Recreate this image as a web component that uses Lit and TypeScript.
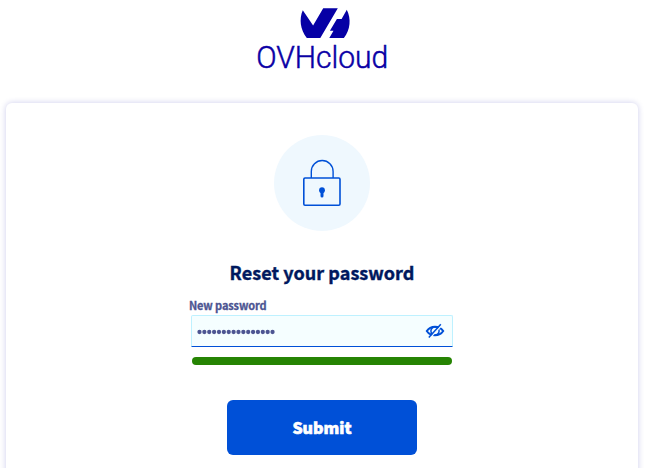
import { LitElement, html, css, svg } from "lit";
import { customElement } from "lit/decorators.js";

@customElement("brand-logo")
class BrandLogo extends LitElement {
  static styles = css`
    :host { display: block; height: 74px; }
    svg { display: block; overflow: visible; }
    .name {
      font-family: Roboto, "Liberation Sans", sans-serif; font-size: 31.5px; font-weight: 300;
      fill: #0a00a5; stroke: #0a00a5; stroke-width: 0.5px;
    }
  `;
  render() {
    return html`<svg width="154" height="80" viewBox="-10 0 154 80" role="img" aria-label="OVHcloud">
      <g fill="#0600a5">
        <path d="M47.8 10.2L58.1 25.4L68.2 8.3H82.8L65.3 38H51.8C45.2 29.5 44 19 47.8 10.2Z" />
        <path d="M91.8 9.8C96.3 18.8 95.5 29.6 88.9 38H74.3L78.5 30.8H74.9L81.9 19H86.6Z" />
      </g>
      <text class="name" x="1.3" y="68" textLength="132" lengthAdjust="spacingAndGlyphs">OVHcloud</text>
    </svg>`;
  }
}

@customElement("lock-badge")
class LockBadge extends LitElement {
  static styles = css`
    :host { display: flex; width: 96px; height: 96px; border-radius: 50%; background: #eff8fe; }
  `;
  render() {
    return html`<svg width="96" height="96" viewBox="0 0 96 96" fill="none" stroke="#0050d7" stroke-width="1.6">
      <path stroke-width="1.4" d="M37.3 43V36.4a10.9 10.9 0 0 1 21.8 0V43" />
      <rect x="29.8" y="43" width="36.2" height="27.2" rx="1.2" />
      <circle cx="48" cy="55.2" r="2.9" fill="#0050d7" stroke="none" />
      <path d="M48 55v6" stroke-width="3" stroke-linecap="round" />
    </svg>`;
  }
}

@customElement("app-root")
class AppRoot extends LitElement {
  static styles = css`
    * { box-sizing: border-box; }
    :host {
      display: flex; flex-direction: column; align-items: center;
      height: 468px; overflow: hidden; background: #fff;
      font-family: "Noto Sans CJK SC", "Noto Sans", sans-serif;
    }
    brand-logo { margin-left: -1px; }
    .card {
      display: flex; flex-direction: column; align-items: center;
      width: 632px; height: 400px; flex: none; margin: 29px 1px 0 0;
      padding-top: 32px; border-radius: 6px; background: #fff;
      box-shadow: 0 0 6px rgba(0, 0, 160, 0.2);
    }
    h1 {
      margin: 28px 0 0; height: 27px; font-size: 18px; line-height: 26px; font-weight: 700;
      letter-spacing: 0.05px; color: #00185e; white-space: nowrap; -webkit-text-stroke: 0.4px #00185e;
    }
    .form { display: flex; flex-direction: column; width: 262px; }
    label {
      margin: 11px 0 0 -2px; height: 18px; font-size: 11px; line-height: 17px; font-weight: 700;
      letter-spacing: -0.12px; color: #4d5592; -webkit-text-stroke: 0.3px #4d5592;
    }
    .field {
      display: flex; align-items: center; justify-content: space-between; height: 32px;
      padding: 0 7px 0 5px; border: 1px solid #bef1ff; border-bottom-color: #0050d7;
      border-radius: 2px 2px 0 0; background: #f5feff;
    }
    .dots { margin-top: 1px; }
    .meter { height: 8px; margin: 10px 1px 0; border-radius: 4px; background: #268403; }
    button {
      width: 190px; height: 55px; margin-top: 35px; padding: 0; border: 0; border-radius: 6px;
      background: #0050d7; color: #fff; font: 900 16px/55px "Noto Sans CJK SC", sans-serif;
      -webkit-text-stroke: 0.6px #fff;
    }
  `;
  render() {
    const dots = Array.from({ length: 16 }, (_, i) => svg`<circle cx=${2.5 + i * 4.87} cy="5" r="2.15" />`);
    return html`
      <brand-logo></brand-logo>
      <main class="card">
        <lock-badge></lock-badge>
        <h1>Reset your password</h1>
        <div class="form">
          <label>New password</label>
          <div class="field">
            <svg class="dots" width="80" height="10" fill="#4d5592" role="img" aria-label="Password">${dots}</svg>
            <svg width="20" height="16" viewBox="0 0 20 16" fill="none" stroke="#0050d7" stroke-width="2">
              <path d="M1.8 8C5.5 2.3 14.5 2.3 18.2 8C14.5 13.7 5.5 13.7 1.8 8Z" />
              <path d="M10 3.9a4.1 4.1 0 1 0 0 8.2a4.1 4.1 0 1 0 0-8.2Z" stroke-width="1.5" />
              <path d="M5.2 14.8L16.8 2.2" stroke="#f5feff" stroke-width="1.4" />
              <path d="M3.8 14.4L15.8 1.2" stroke-width="1.5" />
            </svg>
          </div>
          <div class="meter"></div>
        </div>
        <button>Submit</button>
      </main>
    `;
  }
}
